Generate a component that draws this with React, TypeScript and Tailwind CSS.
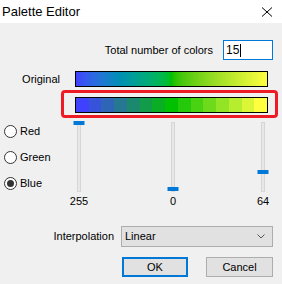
import React from "react";

const font = { fontFamily: '"Liberation Sans", Arial, sans-serif' };

// 15 steps: blue -> green -> yellow
const stops = [
  [64, 64, 255],
  [0, 192, 0],
  [255, 255, 64],
];

function colorAt(i: number, n: number) {
  const t = (i / (n - 1)) * 2;
  const k = t < 1 ? 0 : 1;
  const f = t - k;
  const a = stops[k];
  const b = stops[k + 1];
  const c = a.map((v, j) => Math.round(v + (b[j] - v) * f));
  return `rgb(${c[0]},${c[1]},${c[2]})`;
}

const segments = Array.from({ length: 15 }, (_, i) => colorAt(i, 15));

const sliders = [
  { value: 255, ml: "ml-0" },
  { value: 0, ml: "ml-[64px]" },
  { value: 64, ml: "ml-[60px]" },
];

function Radio({ label, checked }: { label: string; checked?: boolean }) {
  return (
    <div className="flex items-center h-[14px]">
      <div className="w-[13px] h-[13px] rounded-full border border-[#333] bg-white flex items-center justify-center">
        {checked && <div className="w-[7px] h-[7px] rounded-full bg-[#333]" />}
      </div>
      <span className="ml-[3px]">{label}</span>
    </div>
  );
}

export default function App() {
  return (
    <div className="w-[282px] h-[284px] bg-[#f0f0f0] text-[11px] leading-[13px] text-black" style={font}>
      <div className="h-[23px] bg-white flex items-center pl-[2px] text-[13px]">
        <span className="flex-1">Palette Editor</span>
        <svg width="12" height="12" viewBox="0 0 12 12" className="mr-[9px]">
          <path d="M1 1.5 L11 10.5 M11 1.5 L1 10.5" stroke="#000" strokeWidth="1" fill="none" />
        </svg>
      </div>

      <div className="flex items-center justify-end pr-[9px] pt-[17px]">
        <span>Total number of colors</span>
        <div className="ml-[10px] w-[50px] h-[20px] border border-[#0078d7] bg-white flex items-center pl-[2px] text-[12px]">
          <span>15</span>
          <span className="inline-block w-[1px] h-[13px] bg-black ml-[1px]" />
        </div>
      </div>

      <div className="flex items-center mt-[11px]">
        <span className="w-[60px] text-right">Original</span>
        <div className="ml-[15px] w-[193px] h-[16px] border border-black bg-linear-to-r from-[#4040ff] via-[#00c000] to-[#ffff40]" />
      </div>

      <div className="ml-[61px] mt-[3px] w-[217px] h-[28px] border-[3px] border-[#ed1c24] rounded-[4px] pl-[11px] pt-[4px]">
        <div className="w-[193px] h-[16px] border border-black flex">
          {segments.map((c, i) => (
            <div key={i} className="flex-1" style={{ background: c }} />
          ))}
        </div>
      </div>

      <div className="flex mt-[3px]">
        <div className="w-[64px] pl-[4px] pt-[3px] flex flex-col gap-[12px]">
          <Radio label="Red" />
          <Radio label="Green" />
          <Radio label="Blue" checked />
        </div>
        {sliders.map((s, i) => (
          <div key={i} className={`w-[30px] flex flex-col items-center ${s.ml}`}>
            <div className="relative w-[30px] h-[71px]">
              <div className="mx-auto mt-[1px] w-[4px] h-[70px] bg-[#e7e7e7] border border-[#d6d6d6]" />
              <div
                className="absolute left-1/2 -translate-x-1/2 w-[11px] h-[4px] bg-[#0078d7]"
                style={{ top: ((255 - s.value) / 255) * 66 }}
              />
            </div>
            <span className="mt-[3px]">{s.value}</span>
          </div>
        ))}
      </div>

      <div className="flex items-center justify-end pr-[9px] mt-[18px]">
        <span>Interpolation</span>
        <div className="ml-[7px] w-[152px] h-[21px] bg-[#e1e1e1] border border-[#adadad] flex items-center pl-[3px] pr-[7px]">
          <span className="flex-1">Linear</span>
          <svg width="8" height="5" viewBox="0 0 8 5">
            <path d="M0.5 0.5 L4 4 L7.5 0.5" stroke="#555" strokeWidth="1" fill="none" />
          </svg>
        </div>
      </div>

      <div className="flex justify-end pr-[9px] mt-[10px]">
        <div className="w-[66px] h-[20px] border-2 border-[#0078d7] bg-[#e1e1e1] flex items-center justify-center">OK</div>
        <div className="ml-[18px] w-[67px] h-[20px] border border-[#adadad] bg-[#e1e1e1] flex items-center justify-center">Cancel</div>
      </div>
    </div>
  );
}
